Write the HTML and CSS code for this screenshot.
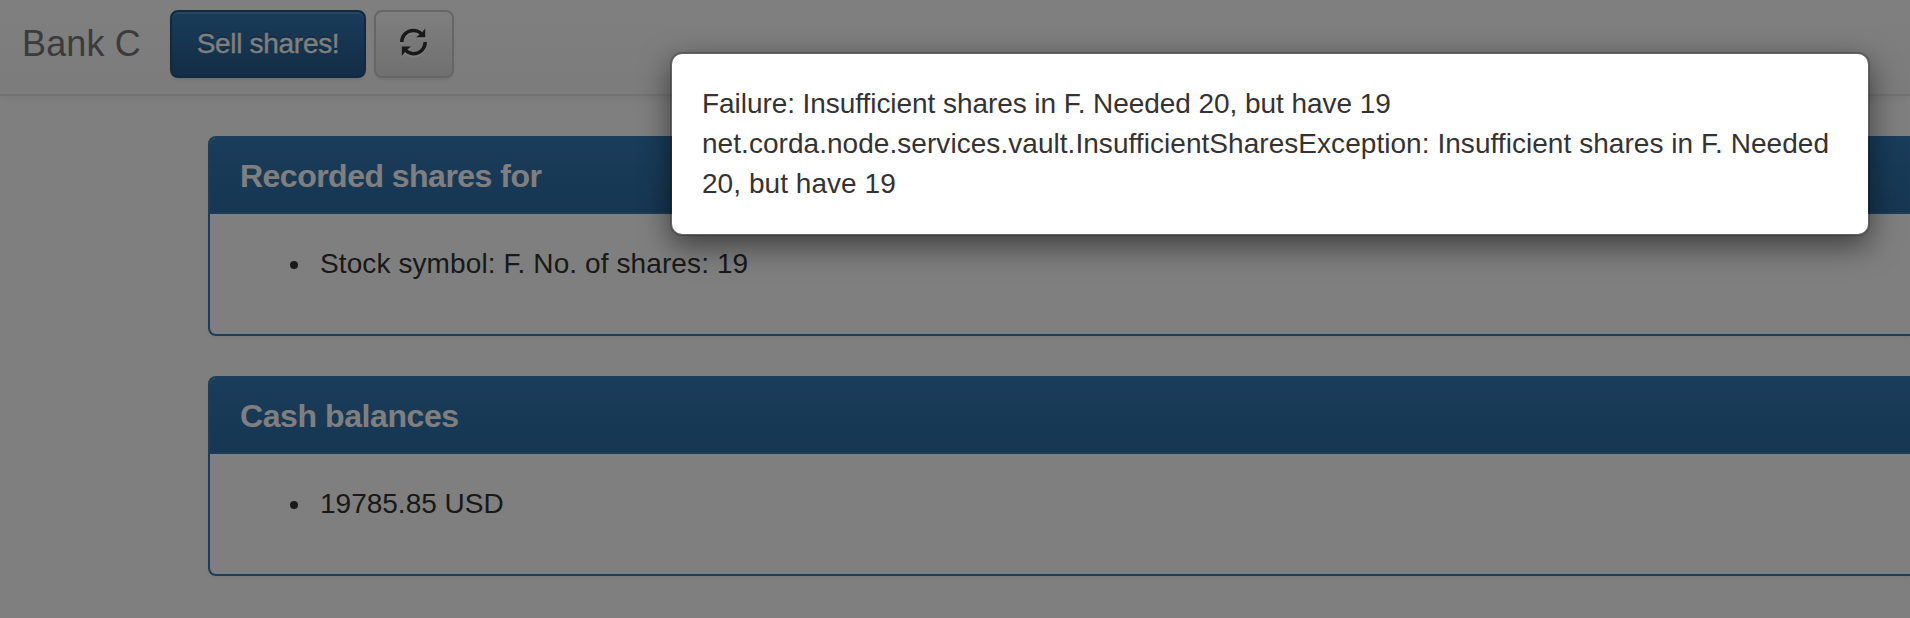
FILE: index.html
```html
<!DOCTYPE html>
<html lang="en">
<head>
<meta charset="utf-8">
<title>Bank C</title>
<link rel="stylesheet" href="styles.css">
</head>
<body>
<nav class="navbar">
  <span class="brand">Bank C</span>
  <button class="btn btn-primary"><span class="btn-label">Sell shares!</span></button>
  <button class="btn btn-default" aria-label="Refresh">
    <svg class="icon" viewBox="0 0 28 28"><path d="M0 14C0 6.5 6 .8 13.4 .8C17 .8 20 2 22.2 4.2L25.2 .4V9.2H16.2L19.6 6.4C18 5 15.9 4.2 13.4 4.2C8 4.2 3.8 8.4 3.6 14ZM27 14C27 21.5 21 27.4 13.8 27.4C10.4 27.4 7.4 26.2 5 24L1.8 28V18.6H11L7.4 21.6C9 23 11.2 24 13.8 24C19 24 23.2 19.8 23.4 14Z"/></svg>
  </button>
</nav>
<main class="container">
  <section class="panel">
    <h3 class="panel-heading"><span class="title-shares">Recorded shares for</span></h3>
    <ul class="panel-body"><li class="item"><span class="stock">Stock symbol: F. No. of shares: 19</span></li></ul>
  </section>
  <section class="panel">
    <h3 class="panel-heading"><span class="title-cash">Cash balances</span></h3>
    <ul class="panel-body"><li class="item"><span class="cash">19785.85 USD</span></li></ul>
  </section>
</main>
<div class="backdrop"></div>
<div class="modal" role="dialog">
  <span class="message">Failure: Insufficient shares in F. Needed 20, but have 19</span><br>
  <span class="detail">net.corda.node.services.vault.InsufficientSharesException: Insufficient shares in F. Needed<br>20, but have 19</span>
</div>
</body>
</html>
```
FILE: styles.css
```css
* { box-sizing: border-box; }
body {
  margin: 0;
  height: 618px;
  overflow: hidden;
  background: #fff;
  color: #333;
  font: 28px/40px "Liberation Sans", Arial, sans-serif;
}
.navbar {
  display: flex;
  align-items: flex-start;
  height: 96px;
  padding: 10px 22px 0;
  background: linear-gradient(#fff, #f8f8f8);
  border-bottom: 2px solid #e7e7e7;
  box-shadow: 0 2px 10px rgba(0, 0, 0, .075);
}
.brand {
  width: 148px;
  padding-top: 14px;
  font-size: 36px;
  color: #777;
  white-space: nowrap;
  letter-spacing: .15px;
}
.btn {
  display: flex;
  align-items: center;
  justify-content: center;
  height: 68px;
  padding: 0;
  border: 2px solid;
  border-radius: 8px;
  font: inherit;
  white-space: nowrap;
}
.btn-primary {
  width: 196px;
  margin-right: 8px;
  color: #fff;
  background: linear-gradient(#337ab7, #265a88) border-box;
  border-color: #245580;
  text-shadow: 0 -2px 0 rgba(0, 0, 0, .2);
  box-shadow: inset 0 2px 0 rgba(255, 255, 255, .15), 0 2px 2px rgba(0, 0, 0, .075);
}
.btn-label {
  letter-spacing: -.3px;
  -webkit-text-stroke: .3px #fff;
}
.btn-default {
  width: 80px;
  background: linear-gradient(#fff, #e0e0e0) border-box;
  border-color: #ccc;
  box-shadow: inset 0 2px 0 rgba(255, 255, 255, .15), 0 2px 2px rgba(0, 0, 0, .075);
}
.icon {
  width: 28px;
  height: 28px;
  margin-bottom: 4px;
  fill: #333;
  filter: drop-shadow(0 2px 0 #fff);
}
.container {
  display: flex;
  flex-direction: column;
  gap: 40px;
  padding: 40px 0 0 208px;
}
.panel {
  height: 200px;
  border: 2px solid #337ab7;
  border-right: 0;
  border-radius: 8px 0 0 8px;
  background: #fff;
  box-shadow: 0 2px 4px rgba(0, 0, 0, .05);
}
.panel-heading {
  height: 76px;
  margin: 0;
  padding: 20px 30px;
  border-bottom: 2px solid #337ab7;
  border-radius: 6px 0 0 0;
  background: linear-gradient(#337ab7, #2e6da4);
  color: #fff;
  font-size: 32px;
  line-height: 36px;
}
.title-shares { letter-spacing: -.52px; }
.title-cash { letter-spacing: -.42px; }
.panel-body {
  margin: 0;
  padding: 30px 30px 50px 80px;
  list-style: none;
}
.item {
  display: flex;
  align-items: center;
  gap: 22px;
}
.item::before {
  content: "";
  width: 8px;
  height: 8px;
  margin-top: 2px;
  border-radius: 50%;
  background: #333;
}
.stock { letter-spacing: .1px; }
.backdrop {
  position: absolute;
  inset: 0;
  background: rgba(0, 0, 0, .5);
}
.modal {
  position: absolute;
  left: 670px;
  top: 52px;
  width: 1200px;
  height: 184px;
  padding: 30px;
  background: #fff;
  background-clip: padding-box;
  border: 2px solid rgba(0, 0, 0, .2);
  border-radius: 12px;
  box-shadow: 0 10px 30px rgba(0, 0, 0, .5);
  white-space: nowrap;
}
.message { letter-spacing: -.06px; }
.detail { letter-spacing: .048px; }
```
